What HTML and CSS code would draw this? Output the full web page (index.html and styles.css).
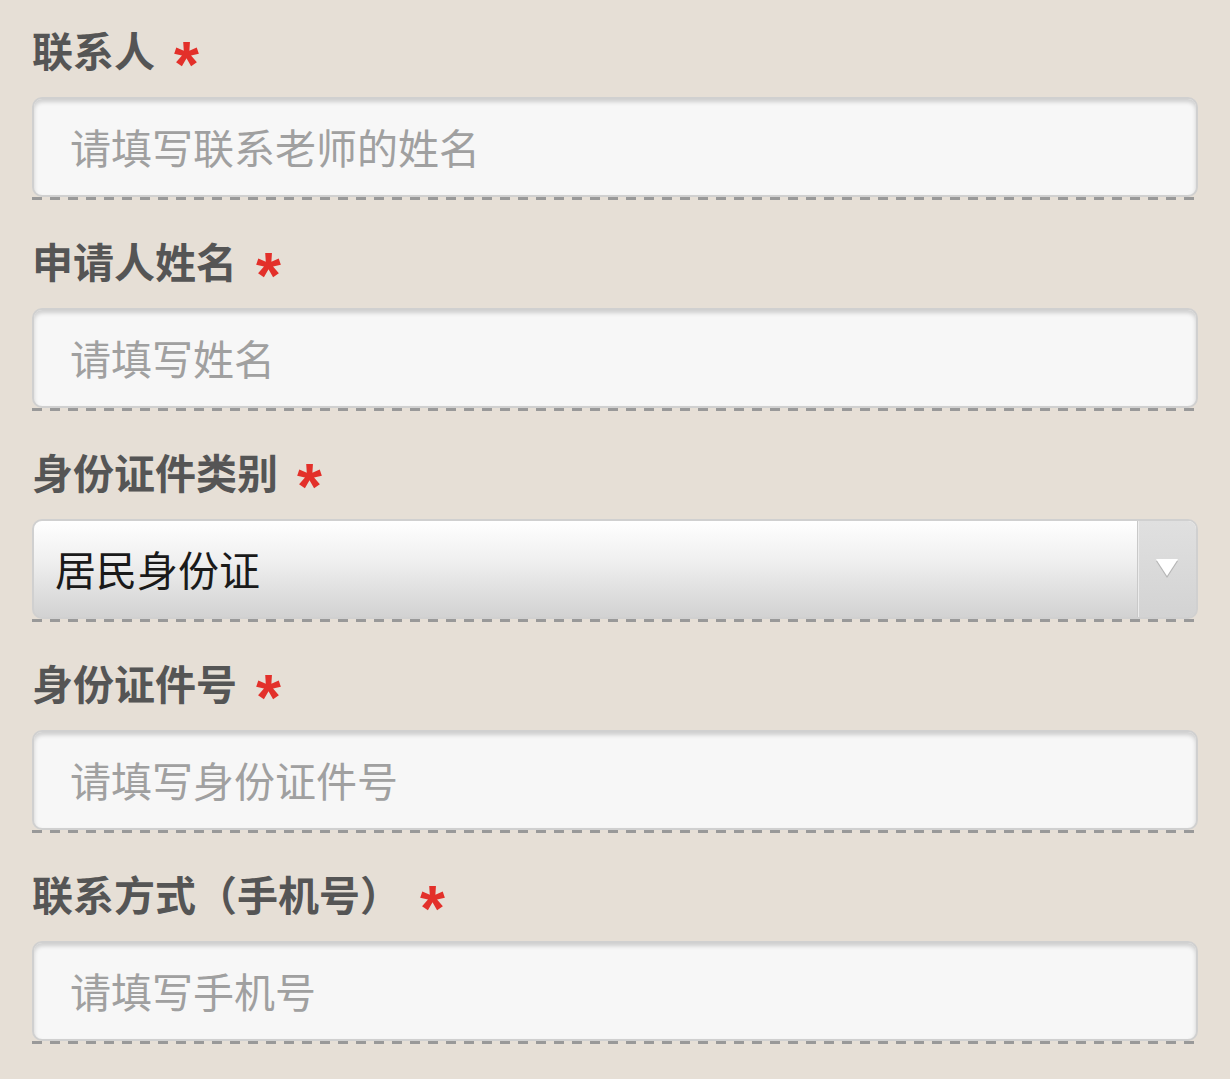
FILE: index.html
```html
<!DOCTYPE html>
<html lang="zh-CN">
<head>
<meta charset="utf-8">
<title>表单</title>
<link rel="stylesheet" href="styles.css">
</head>
<body>
<form class="form">
  <div class="field">
    <label class="label">联系人<span class="req">*</span></label>
    <input class="input" type="text" placeholder="请填写联系老师的姓名">
    <div class="dash"></div>
  </div>
  <div class="field">
    <label class="label">申请人姓名<span class="req">*</span></label>
    <input class="input" type="text" placeholder="请填写姓名">
    <div class="dash"></div>
  </div>
  <div class="field">
    <label class="label">身份证件类别<span class="req">*</span></label>
    <div class="select">
      <span class="select-text">居民身份证</span>
      <span class="select-btn">
        <svg width="26" height="24" viewBox="0 0 26 24">
          <path d="M2 4 L24 4 L13 21 Z" fill="#b5b5b5"/>
          <path d="M2 2 L24 2 L13 19 Z" fill="#ffffff"/>
        </svg>
      </span>
    </div>
    <div class="dash"></div>
  </div>
  <div class="field">
    <label class="label">身份证件号<span class="req">*</span></label>
    <input class="input" type="text" placeholder="请填写身份证件号">
    <div class="dash"></div>
  </div>
  <div class="field">
    <label class="label">联系方式（手机号）<span class="req">*</span></label>
    <input class="input" type="text" placeholder="请填写手机号">
    <div class="dash"></div>
  </div>
</form>
</body>
</html>
```
FILE: styles.css
```css
html, body {
  margin: 0;
  padding: 0;
  background: #e6dfd6;
}
body {
  font-family: "Noto Sans CJK SC", "Noto Sans", sans-serif;
}
.form {
  padding: 0 32px 35px 32px;
}
.field {
  padding-top: 40px;
}
.field:first-child {
  padding-top: 29px;
}
.label {
  display: flex;
  align-items: flex-start;
  height: 41px;
  font-size: 41px;
  line-height: 41px;
  font-weight: 700;
  color: #555555;
  margin-bottom: 27px;
}
.req {
  font-family: "Liberation Sans", Arial, sans-serif;
  font-weight: 700;
  font-size: 64px;
  line-height: 64px;
  height: 41px;
  color: #e3302a;
  margin-left: 19px;
  margin-top: 4px;
}
.input {
  display: block;
  box-sizing: border-box;
  width: 100%;
  height: 100px;
  margin: 0;
  padding: 0 0 2px 36px;
  border: 2px solid #d0d0d0;
  border-radius: 10px;
  background: #f7f7f7;
  box-shadow: inset 0 3px 4px rgba(0, 0, 0, 0.17);
  font-family: "Noto Sans CJK SC", sans-serif;
  font-size: 41px;
  color: #222;
  outline: none;
}
.input::placeholder {
  color: #a0a0a0;
  font-weight: 400;
}
.select {
  box-sizing: border-box;
  height: 100px;
  display: flex;
  align-items: stretch;
  border: 2px solid #d0d0d0;
  border-radius: 10px;
  background: linear-gradient(#ffffff 0%, #f0f0f0 40%, #d2d2d2 100%);
  overflow: hidden;
}
.select-text {
  flex: 1;
  display: flex;
  align-items: center;
  padding-left: 21px;
  padding-bottom: 2px;
  font-size: 41px;
  color: #1a1a1a;
}
.select-btn {
  width: 58px;
  display: flex;
  align-items: center;
  justify-content: center;
  border-left: 1px solid #c9c9c9;
  box-shadow: inset 1px 0 0 #ececec;
  background: linear-gradient(#e0e0e0, #d3d3d3);
}
.dash {
  height: 3px;
  margin-top: 0;
  background: repeating-linear-gradient(90deg, #999999 0 10px, transparent 10px 18px);
}
```
